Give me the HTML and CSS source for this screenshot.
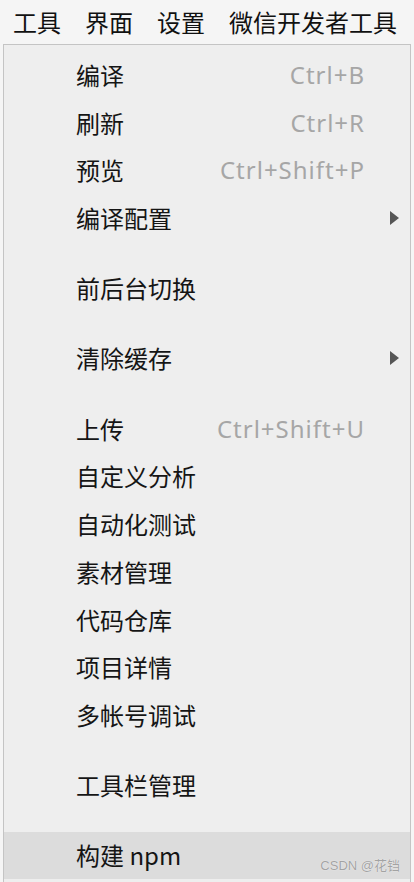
FILE: index.html
```html
<!DOCTYPE html>
<html lang="zh-CN">
<head>
<meta charset="utf-8">
<title>工具菜单</title>
<link rel="stylesheet" href="styles.css">
</head>
<body>
<div class="app">
  <nav class="menubar">
    <span class="menubar-item">工具</span>
    <span class="menubar-item">界面</span>
    <span class="menubar-item">设置</span>
    <span class="menubar-item">微信开发者工具</span>
  </nav>
  <div class="menu">
    <div class="row"><span class="label">编译</span><span class="shortcut">Ctrl+B</span><span class="arrow-slot"></span></div>
    <div class="row"><span class="label">刷新</span><span class="shortcut">Ctrl+R</span><span class="arrow-slot"></span></div>
    <div class="row"><span class="label">预览</span><span class="shortcut">Ctrl+Shift+P</span><span class="arrow-slot"></span></div>
    <div class="row"><span class="label">编译配置</span><span class="shortcut"></span><span class="arrow-slot"><span class="arrow"></span></span></div>
    <div class="sep"></div>
    <div class="row"><span class="label">前后台切换</span><span class="shortcut"></span><span class="arrow-slot"></span></div>
    <div class="sep"></div>
    <div class="row"><span class="label">清除缓存</span><span class="shortcut"></span><span class="arrow-slot"><span class="arrow"></span></span></div>
    <div class="sep"></div>
    <div class="row"><span class="label">上传</span><span class="shortcut">Ctrl+Shift+U</span><span class="arrow-slot"></span></div>
    <div class="row"><span class="label">自定义分析</span><span class="shortcut"></span><span class="arrow-slot"></span></div>
    <div class="row"><span class="label">自动化测试</span><span class="shortcut"></span><span class="arrow-slot"></span></div>
    <div class="row"><span class="label">素材管理</span><span class="shortcut"></span><span class="arrow-slot"></span></div>
    <div class="row"><span class="label">代码仓库</span><span class="shortcut"></span><span class="arrow-slot"></span></div>
    <div class="row"><span class="label">项目详情</span><span class="shortcut"></span><span class="arrow-slot"></span></div>
    <div class="row"><span class="label">多帐号调试</span><span class="shortcut"></span><span class="arrow-slot"></span></div>
    <div class="sep"></div>
    <div class="row"><span class="label">工具栏管理</span><span class="shortcut"></span><span class="arrow-slot"></span></div>
    <div class="sep"></div>
    <div class="row active"><span class="label">构建 npm</span><span class="shortcut"></span><span class="arrow-slot"></span></div>
  </div>
  <div class="watermark">CSDN @花铛</div>
</div>
</body>
</html>
```

FILE: styles.css
```css
* { box-sizing: border-box; }
html, body {
  margin: 0;
  padding: 0;
  background: #f5f5f5;
}
body {
  font-family: "Noto Sans CJK SC", "Noto Sans", sans-serif;
  color: #1a1a1a;
  width: 414px;
  height: 882px;
  overflow: hidden;
}
.app {
  position: relative;
  height: 882px;
  display: flex;
  flex-direction: column;
}
.menubar {
  height: 44px;
  display: flex;
  align-items: center;
  gap: 24px;
  padding-left: 13px;
  font-size: 24px;
  line-height: 1;
  color: #111;
}
.menubar-item {
  display: block;
  padding-bottom: 1px;
}
.menu {
  margin-left: 3px;
  width: 408px;
  flex: 1;
  background: #eeeeee;
  border: 1px solid #c4c4c4;
  border-bottom: none;
  padding-top: 6px;
  display: flex;
  flex-direction: column;
}
.row {
  height: 47.7px;
  flex: none;
  display: flex;
  align-items: center;
  padding-left: 72px;
  font-size: 24px;
  line-height: 1;
  color: #151515;
}
.row.active {
  background: #dcdcdc;
  height: 47px;
}
.label {
  flex: 1;
}
.shortcut {
  color: #a6a6a6;
  font-size: 24px;
  letter-spacing: 1px;
  margin-right: -1px;
  font-family: "Noto Sans", "Open Sans", sans-serif;
}
.arrow-slot {
  width: 46px;
  display: flex;
  justify-content: flex-end;
  padding-right: 11px;
}
.arrow {
  width: 0;
  height: 0;
  border-top: 7px solid transparent;
  border-bottom: 7px solid transparent;
  border-left: 9px solid #555555;
}
.sep {
  height: 22.6px;
  flex: none;
}
.watermark {
  position: absolute;
  right: 14px;
  bottom: 8px;
  font-family: "Liberation Sans", "Noto Sans CJK SC", sans-serif;
  font-size: 13px;
  color: #a3a3a3;
  text-shadow: 0 0 1px #ffffff;
}
```
